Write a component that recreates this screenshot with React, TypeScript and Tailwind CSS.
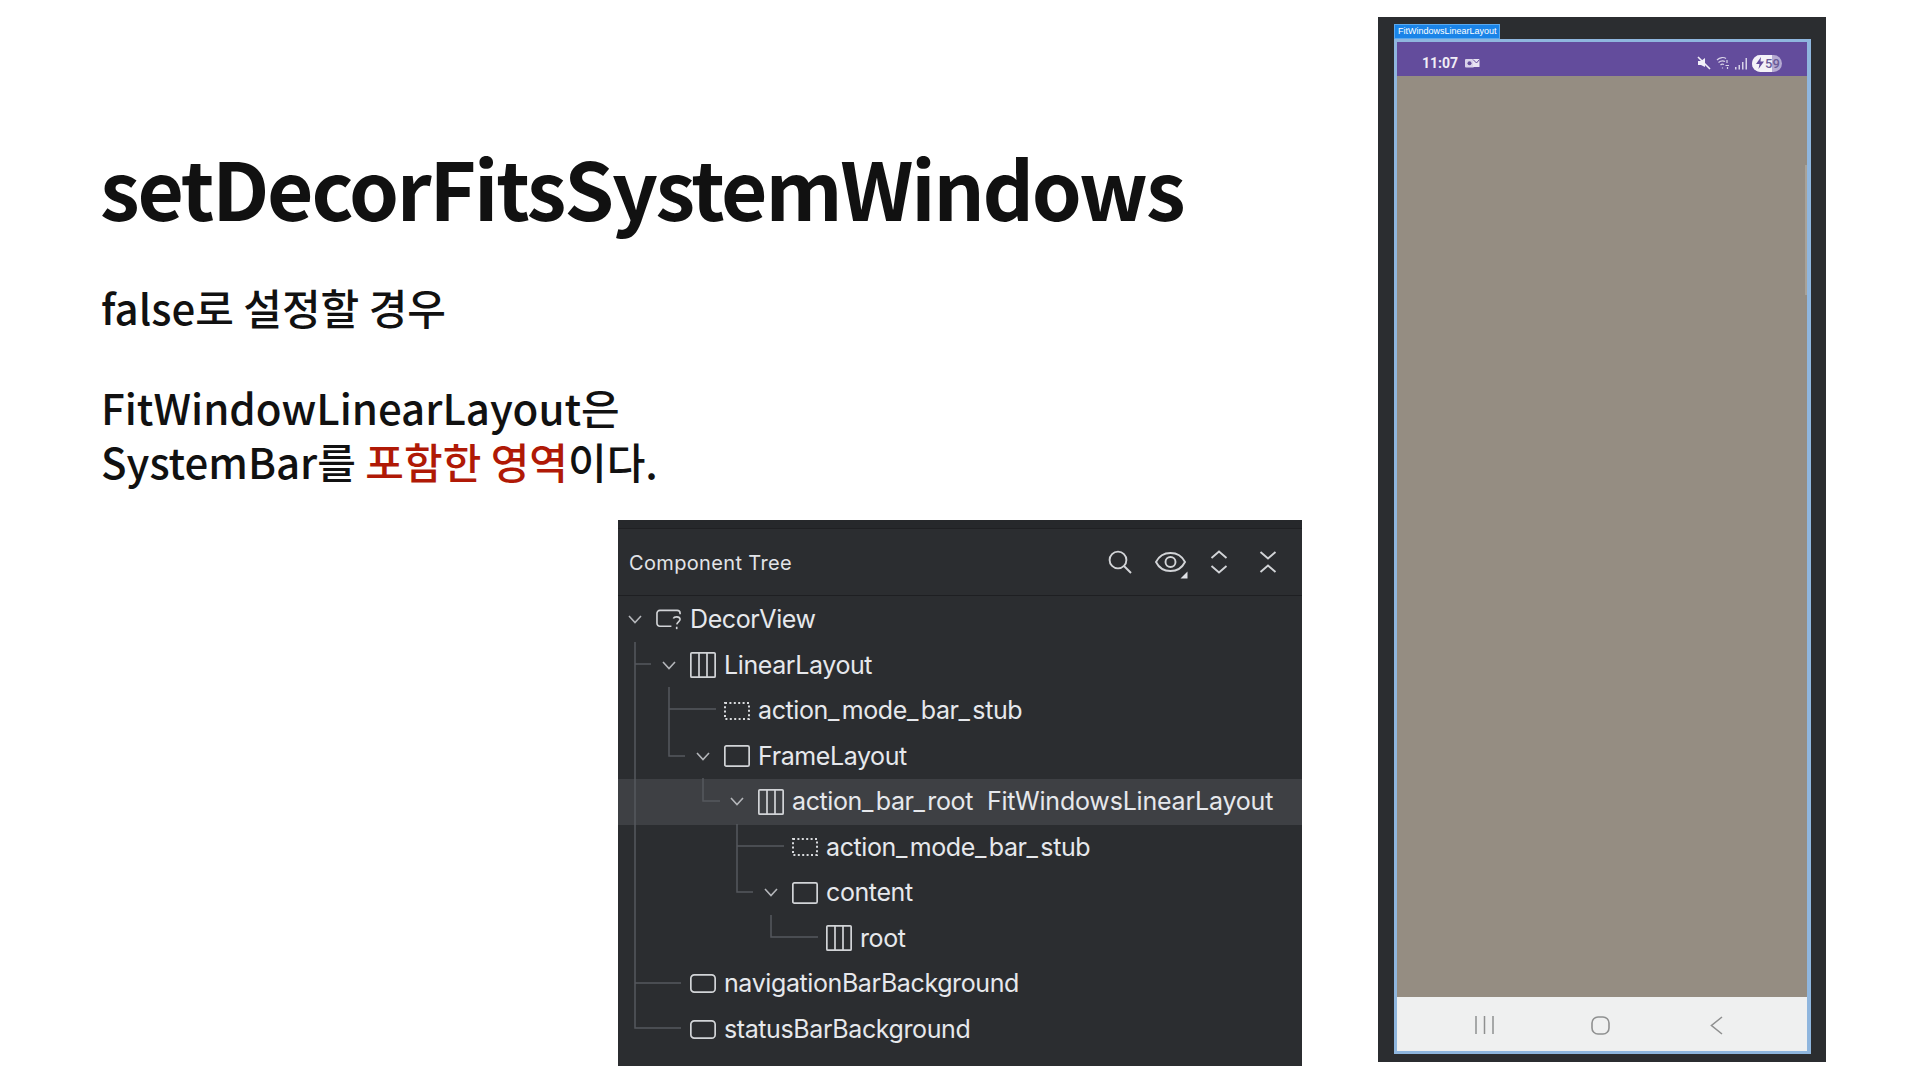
import React from "react";

const C = "font-['Noto_Sans_CJK_KR','Noto_Sans',sans-serif]";

function Chevron() {
  return (
    <svg width="14" height="9" viewBox="0 0 14 9" fill="none" stroke="#b4b6ba" strokeWidth="1.6">
      <path d="M1 1 L7 7.5 L13 1" />
    </svg>
  );
}

function IconLinear() {
  return (
    <svg width="26" height="26" viewBox="0 0 26 26" fill="none" stroke="#d2d4d7" strokeWidth="1.7">
      <rect x="0.85" y="0.85" width="24.3" height="24.3" rx="1" />
      <path d="M9 1V25M17 1V25" />
    </svg>
  );
}
function IconDashed() {
  return (
    <svg width="26" height="18" viewBox="0 0 26 18" fill="none" stroke="#d8dadd" strokeWidth="2" strokeDasharray="2 2.4">
      <rect x="1" y="1" width="24" height="16" />
    </svg>
  );
}
function IconFrame() {
  return (
    <svg width="26" height="22" viewBox="0 0 26 22" fill="none" stroke="#d2d4d7" strokeWidth="1.7">
      <rect x="0.85" y="0.85" width="24.3" height="20.3" rx="1.5" />
    </svg>
  );
}
function IconView() {
  return (
    <svg width="26" height="19" viewBox="0 0 26 19" fill="none" stroke="#d2d4d7" strokeWidth="1.7">
      <rect x="0.85" y="0.85" width="24.3" height="17.3" rx="3.5" />
    </svg>
  );
}
function IconDecor() {
  return (
    <svg width="27" height="22" viewBox="0 0 27 22" fill="none" stroke="#d2d4d7" strokeWidth="1.7">
      <path d="M16 17.5H4a3 3 0 0 1-3-3V4a3 3 0 0 1 3-3h18a3 3 0 0 1 3 3v1" />
      <path d="M18 9.5c1-2.4 6.5-2.4 7 .6.3 2.2-3 2.6-3.4 5.4" />
      <path d="M21.5 18v2.5" />
    </svg>
  );
}

type RowT = {
  level: string;
  chevron?: boolean;
  icon: React.ReactNode;
  label: string;
  extra?: string;
  selected?: boolean;
};

const rows: RowT[] = [
  { level: "pl-[4px]", chevron: true, icon: <IconDecor />, label: "DecorView" },
  { level: "pl-[38px]", chevron: true, icon: <IconLinear />, label: "LinearLayout" },
  { level: "pl-[72px]", icon: <IconDashed />, label: "action_mode_bar_stub" },
  { level: "pl-[72px]", chevron: true, icon: <IconFrame />, label: "FrameLayout" },
  { level: "pl-[106px]", chevron: true, icon: <IconLinear />, label: "action_bar_root", extra: "FitWindowsLinearLayout", selected: true },
  { level: "pl-[140px]", icon: <IconDashed />, label: "action_mode_bar_stub" },
  { level: "pl-[140px]", chevron: true, icon: <IconFrame />, label: "content" },
  { level: "pl-[174px]", icon: <IconLinear />, label: "root" },
  { level: "pl-[38px]", icon: <IconView />, label: "navigationBarBackground" },
  { level: "pl-[38px]", icon: <IconView />, label: "statusBarBackground" },
];

function Label({ text }: { text: string }) {
  const parts = text.split("_");
  return (
    <>
      {parts.map((p, i) => (
        <React.Fragment key={i}>
          {i > 0 ? <span className="tracking-[2.4px]">_</span> : null}
          {p}
        </React.Fragment>
      ))}
    </>
  );
}

function Row({ r }: { r: RowT }) {
  return (
    <div className={`flex items-center h-[45.5px] ${r.level} ${r.selected ? "bg-[#3e4044]" : ""}`}>
      <div className="w-[34px] pl-[6px] flex items-center shrink-0">{r.chevron ? <Chevron /> : null}</div>
      <div className="w-[26px] flex items-center justify-center shrink-0">{r.icon}</div>
      <span className="ml-[8px] text-[25px] leading-none text-[#e6e8ec] font-['Inter',sans-serif] tracking-[-0.4px] whitespace-pre">
        <Label text={r.label} />
      </span>
      {r.extra ? (
        <span className="ml-[14px] text-[25px] leading-none text-[#e6e8ec] font-['Inter',sans-serif] tracking-[-0.2px] whitespace-pre">{r.extra}</span>
      ) : null}
    </div>
  );
}

function Connectors() {
  return (
    <svg className="absolute left-0 top-0 pointer-events-none" width="684" height="468" viewBox="618 596 684 468" fill="none" stroke="#55585d" strokeWidth="1.5">
      <path d="M635 642V1028H681M635 664H651M635 983H681" />
      <path d="M669 687V756H685M669 709H716" />
      <path d="M703 778V801H720" />
      <path d="M737 824V892H753M737 846H784" />
      <path d="M771 915V937H818" />
    </svg>
  );
}

function TreePanel() {
  return (
    <div className="ml-[618px] mt-[32px] w-[684px] h-[546px] bg-[#2b2d30] flex flex-col">
      <div className="h-[9px] bg-[#26282b] border-b border-[#1f2023]" />
      <div className="h-[67px] flex items-center justify-between border-b border-[#1e1f22] pl-[11px]">
        <span className="pt-[1px] text-[20px] tracking-[0.35px] text-[#e2e4e8] font-['Inter',sans-serif]">Component Tree</span>
        <div className="flex items-center pr-[25px]">
          <svg width="24" height="24" viewBox="0 0 24 24" fill="none" stroke="#d2d4d7" strokeWidth="1.9">
            <circle cx="10" cy="10" r="8.4" />
            <path d="M16 16 L23 23" />
          </svg>
          <svg className="ml-[23px] mt-[4px]" width="33" height="29" viewBox="0 0 33 29" fill="none" stroke="#d2d4d7" strokeWidth="1.9">
            <path d="M1 12C7 0 24 0 30 12C24 24 7 24 1 12Z" />
            <circle cx="15.5" cy="12" r="5" />
            <path d="M32.5 21.5V28.5H25.5Z" fill="#dfe1e5" stroke="none" />
          </svg>
          <svg className="ml-[22px]" width="18" height="24" viewBox="0 0 18 24" fill="none" stroke="#d2d4d7" strokeWidth="1.9">
            <path d="M1.5 8 L9 1.5 L16.5 8M1.5 16 L9 22.5 L16.5 16" />
          </svg>
          <svg className="ml-[31px]" width="18" height="24" viewBox="0 0 18 24" fill="none" stroke="#d2d4d7" strokeWidth="1.9">
            <path d="M1.5 2 L9 8.5 L16.5 2M1.5 22 L9 15.5 L16.5 22" />
          </svg>
        </div>
      </div>
      <div className="relative flex-1 pt-[1px]">
        {rows.map((r, i) => (
          <Row key={i} r={r} />
        ))}
        <Connectors />
      </div>
    </div>
  );
}

function Phone() {
  return (
    <div className="mt-[17px] w-[448px] h-[1045px] bg-[#2b2d30] flex flex-col pl-[16px] pr-[15px] pt-[7px] pb-[8px]">
      <div className="w-[106px] h-[15px] bg-[#1a84e8] border border-[#5aa9ee] flex items-center pl-[3px] text-[9px] leading-none text-white font-['Liberation_Sans',sans-serif] whitespace-nowrap">
        FitWindowsLinearLayout
      </div>
      <div className="flex-1 border-l-[3px] border-t-[3px] border-b-[3px] border-r-[4px] border-[#8fb6de] flex flex-col">
        <div className="h-[34px] bg-[#634c9c] flex items-center pt-[8px] pl-[25px] pr-[25px]">
          <span className="text-[14px] font-bold text-[#f0edf6] font-['Roboto',sans-serif] leading-none">11:07</span>
          <svg className="ml-[7px]" width="15" height="12" viewBox="0 0 15 12">
            <rect x="0" y="2" width="9" height="8.5" rx="1" fill="#d9d3ea" />
            <circle cx="4.5" cy="6.2" r="2" fill="#634c9c" />
            <path d="M8 2H14.5V10H8Z" fill="#e8e4f2" />
            <path d="M8 2.5L11.5 6L14.5 2.5" fill="none" stroke="#634c9c" strokeWidth="1" />
          </svg>
          <div className="flex-1" />
          <svg width="14" height="14" viewBox="0 0 14 14">
            <path d="M1 5H4L8 2V11L4 9H1Z" fill="#f2f0f8" />
            <path d="M1 1L13 13" stroke="#f2f0f8" strokeWidth="1.6" />
          </svg>
          <svg className="ml-[5px]" width="15" height="14" viewBox="0 0 15 14" fill="none" stroke="#d8d2e8" strokeWidth="1.2">
            <path d="M1 4C4 1 8 1 10 2.5M2.5 6.5C5 4.5 7 4.5 9 5.5M4.5 9C5.5 8 7 8 8 8.5" />
            <path d="M6.5 11.5V12.5M11 4V7M9.5 9.5H13M11.5 11V13" />
          </svg>
          <svg className="ml-[4px]" width="13" height="13" viewBox="0 0 13 13" fill="#d8d2e8">
            <rect x="0" y="10" width="1.5" height="2.5" />
            <rect x="3.5" y="8" width="1.5" height="4.5" />
            <rect x="7" y="5" width="1.5" height="7.5" />
            <rect x="10.5" y="1" width="1.5" height="11.5" />
          </svg>
          <div className="ml-[4px] w-[30px] h-[17px] rounded-full overflow-hidden flex items-center bg-[#b5aad2] relative">
            <div className="absolute left-0 top-0 bottom-0 w-[20px] bg-[#f4f2f8]" />
            <div className="relative flex items-center pl-[4px]">
              <svg width="8" height="12" viewBox="0 0 8 12">
                <path d="M5 0L0 7H3.5L2.5 12L8 4.5H4.5Z" fill="#634c9c" />
              </svg>
              <span className="ml-[1px] text-[13px] font-medium leading-none text-[#6a5c98] font-['Roboto',sans-serif]">59</span>
            </div>
          </div>
        </div>
        <div className="flex-1 bg-[#958d82] relative">
          <div className="absolute right-0 top-[89px] h-[130px] w-[2px] bg-[#a8a298]" />
        </div>
        <div className="h-[54px] bg-[#eff0f0] flex items-center pt-[2px]">
          <svg className="ml-[78px]" width="19" height="18" viewBox="0 0 19 18" stroke="#8f9090" strokeWidth="1.5">
            <path d="M1 0V18M9.5 0V18M18 0V18" />
          </svg>
          <svg className="ml-[97px]" width="19" height="19" viewBox="0 0 19 19" fill="none" stroke="#8f9090" strokeWidth="1.6">
            <rect x="1" y="1" width="17" height="17" rx="6" />
          </svg>
          <svg className="ml-[100px]" width="13" height="19" viewBox="0 0 13 19" fill="none" stroke="#8f9090" strokeWidth="1.6">
            <path d="M12 1L1.5 9.5L12 18" />
          </svg>
        </div>
      </div>
    </div>
  );
}

export default function App() {
  return (
    <div className="w-[1920px] h-[1080px] bg-white flex overflow-hidden">
      <div className={`w-[1378px] shrink-0 flex flex-col ${C}`}>
        <h1 className="ml-[100px] mt-[126px] h-[120px] text-[80px] leading-[120px] font-bold text-[#111111] whitespace-nowrap tracking-[-2.2px]">
          setDecorFitsSystemWindows
        </h1>
        <p className="ml-[101px] mt-[34px] h-[54px] text-[42px] leading-[54px] font-medium text-[#111111] whitespace-nowrap">
          false로 설정할 경우
        </p>
        <p className="ml-[101px] mt-[46px] text-[42px] leading-[54px] font-medium text-[#111111] whitespace-nowrap">
          FitWindowLinearLayout은
          <br />
          SystemBar를 <span className="text-[#b01906]">포함한 영역</span>이다.
        </p>
        <TreePanel />
      </div>
      <Phone />
    </div>
  );
}
